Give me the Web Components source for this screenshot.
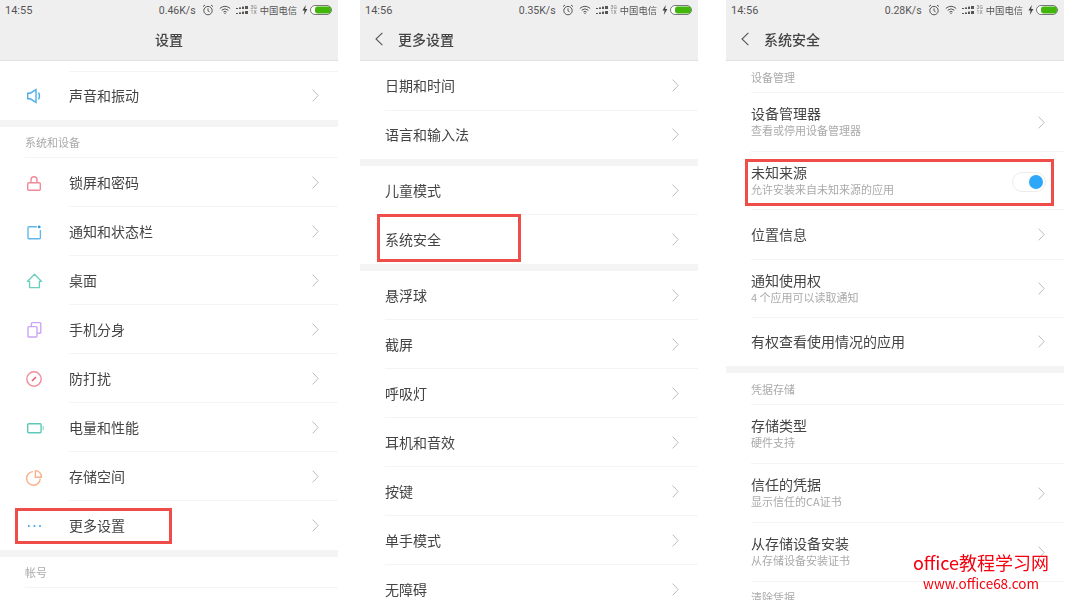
<!DOCTYPE html>
<html lang="zh">
<head>
<meta charset="utf-8">
<title>设置</title>
<style>
    html, body { margin: 0; background: #fff; }
    body { width: 1068px; height: 600px; overflow: hidden; font-family: "Noto Sans CJK SC", "Noto Sans", sans-serif; color: #444; }
    .page { display: flex; position: relative; height: 600px; filter: blur(0.3px); }
    .page phone-screen:nth-child(2) { margin-left: 22px; }
    .page phone-screen:nth-child(3) { margin-left: 28px; }
</style>
</head>
<body>
<div class="page">
    <phone-screen time="14:55" speed="0.46K/s" title="设置" center>
        <set-gap height="11"></set-gap>
        <set-row icon="sound" height="48" last>声音和振动</set-row>
        <set-band></set-band>
        <set-label height="31">系统和设备</set-label>
        <set-row icon="lock">锁屏和密码</set-row>
        <set-row icon="notify">通知和状态栏</set-row>
        <set-row icon="home">桌面</set-row>
        <set-row icon="clone">手机分身</set-row>
        <set-row icon="dnd">防打扰</set-row>
        <set-row icon="battery">电量和性能</set-row>
        <set-row icon="pie">存储空间</set-row>
        <set-row icon="more" last>更多设置</set-row>
        <set-band></set-band>
        <set-label height="31">帐号</set-label>
        <red-box style="left:15px;top:508px;width:157px;height:36px"></red-box>
    </phone-screen>

    <phone-screen time="14:56" speed="0.35K/s" title="更多设置" back>
        <set-row height="50">日期和时间</set-row>
        <set-row height="48" last>语言和输入法</set-row>
        <set-band></set-band>
        <set-row>儿童模式</set-row>
        <set-row last>系统安全</set-row>
        <set-band></set-band>
        <set-row>悬浮球</set-row>
        <set-row>截屏</set-row>
        <set-row>呼吸灯</set-row>
        <set-row>耳机和音效</set-row>
        <set-row>按键</set-row>
        <set-row>单手模式</set-row>
        <set-row last>无障碍</set-row>
        <red-box style="left:17px;top:214px;width:144px;height:48px"></red-box>
    </phone-screen>

    <phone-screen time="14:56" speed="0.28K/s" title="系统安全" back>
        <set-label height="32">设备管理</set-label>
        <set-row sub="查看或停用设备管理器" height="59">设备管理器</set-row>
        <set-row sub="允许安装来自未知来源的应用" height="58" toggle>未知来源</set-row>
        <set-row height="50">位置信息</set-row>
        <set-row sub="4 个应用可以读取通知" height="58">通知使用权</set-row>
        <set-row height="48" last>有权查看使用情况的应用</set-row>
        <set-band></set-band>
        <set-label height="32">凭据存储</set-label>
        <set-row sub="硬件支持" height="59" nochevron>存储类型</set-row>
        <set-row sub="显示信任的CA证书" height="59">信任的凭据</set-row>
        <set-row sub="从存储设备安装证书" height="59">从存储设备安装</set-row>
        <set-label height="31">清除凭据</set-label>
        <red-box style="left:19px;top:159px;width:309px;height:47px"></red-box>
    </phone-screen>

    <water-mark></water-mark>
</div>

<script>
const ICONS = {
    sound: `<g fill="none" stroke="#4fb0ea" stroke-width="1.4"><path d="M3.7 7.2h2.6L12 3.6v12.8l-5.7-3.6H3.7z"/><path d="M14.6 6.6q1.8 3.4 0 6.8"/></g>`,
    lock: `<g fill="none" stroke="#f08a9a" stroke-width="1.4"><rect x="3.7" y="9.7" width="12.6" height="7.6" rx="1"/><path d="M7 9.7V6.8a3 3 0 0 1 6 0v2.9"/></g>`,
    notify: `<path d="M13 4.7H5a1 1 0 0 0-1 1v10a1 1 0 0 0 1 1h10.4a1 1 0 0 0 1-1V8" fill="none" stroke="#62b8ec" stroke-width="1.4"/><circle cx="15.2" cy="4.9" r="1.4" fill="#2a9be6"/>`,
    home: `<path d="M3.4 10.4 10.5 3.2l7.1 7.2h-2.2v6.2H5.6v-6.2z" fill="none" stroke="#6fcfbf" stroke-width="1.4" stroke-linejoin="round"/>`,
    clone: `<g fill="none" stroke="#c9a6f5" stroke-width="1.4"><rect x="4" y="6.6" width="9" height="10.4" rx="1"/><path d="M7.4 6.4V3.6a1 1 0 0 1 1-1h7.4a1 1 0 0 1 1 1v8.6a1 1 0 0 1-1 1H13.2"/></g>`,
    dnd: `<circle cx="10" cy="10" r="7.2" fill="none" stroke="#ee8c9a" stroke-width="1.4"/><path d="M8 12 12 8" stroke="#e4566c" stroke-width="1.4"/>`,
    battery: `<rect x="3.7" y="5.7" width="13.4" height="9" rx="1" fill="none" stroke="#5cc8b8" stroke-width="1.4"/><rect x="18.6" y="8" width="1.2" height="4.2" fill="#8adccf"/>`,
    pie: `<g fill="none" stroke="#f8b08a" stroke-width="1.4"><path d="M9 4.6a6.8 6.8 0 1 0 7.2 7.2"/><path d="M11.4 3.6v6.6h6A6.2 6.2 0 0 0 11.4 3.6z"/></g>`,
    more: `<g fill="#3aa0e8"><circle cx="4.8" cy="10" r="1"/><circle cx="10.4" cy="10" r="1"/><circle cx="16" cy="10" r="1"/></g>`,
};

class PhoneScreen extends HTMLElement {
    constructor() {
        super();
        const title = this.getAttribute("title");
        const center = this.hasAttribute("center");
        const back = this.hasAttribute("back");
        this.removeAttribute("title");
        this.attachShadow({ mode: "open" }).innerHTML = `
      <style>
        :host { display: flex; flex-direction: column; position: relative; width: 338px; height: 600px; overflow: hidden; flex: none; }
        header { flex: none; height: 61px; background: #f0eff0; box-shadow: inset 0 -1px 0 #e2e1e2; }
        .bar { display: flex; align-items: center; height: 41px; font-size: 14px; color: #444; font-weight: 500; padding-bottom: 3px; box-sizing: border-box; }
        .bar.center { justify-content: center; }
        .bar svg { margin: 0 15px 0 15px; flex: none; }
        main { flex: 1; min-height: 0; }
      </style>
      <header>
        <status-bar time="${this.getAttribute("time")}" speed="${this.getAttribute("speed")}"></status-bar>
        <div class="bar ${center ? "center" : ""}">
          ${back ? `<svg width="8" height="14" viewBox="0 0 8 14"><path d="M7.4.8 1 7l6.4 6.2" fill="none" stroke="#555" stroke-width="1.1"/></svg>` : ""}
          <span>${title}</span>
        </div>
      </header>
      <main><slot></slot></main>`;
    }
}

class StatusBar extends HTMLElement {
    constructor() {
        super();
        this.attachShadow({ mode: "open" }).innerHTML = `
      <style>
        :host { display: flex; align-items: center; height: 20px; padding: 0 5px; font: 11px Roboto, "Noto Sans CJK SC", sans-serif; color: #555; }
        .right { margin-left: auto; display: flex; align-items: center; }
        .speed { margin-right: 6px; font-size: 10.5px; }
        .net { display: flex; flex-direction: column; font-size: 5px; line-height: 5px; color: #777; margin: 0 3px 0 2px; }
        .carrier { font: 9.3px/20px "Noto Sans CJK SC", sans-serif; margin-right: 5px; }
        svg { display: block; flex: none; }
      </style>
      <span>${this.getAttribute("time")}</span>
      <div class="right">
        <span class="speed">${this.getAttribute("speed")}</span>
        <svg width="12" height="12" viewBox="0 0 12 12" fill="none" stroke="#555" stroke-width="1"><circle cx="6" cy="6.6" r="4.2"/><path d="M6 4.4v2.4l1.6 1M1 2.6 3 1M11 2.6 9 1"/></svg>
        <svg width="12" height="10" viewBox="0 0 12 10" fill="none" stroke="#555" stroke-width="1" style="margin:0 5px 0 5px"><path d="M.8 3.4Q6-.8 11.2 3.4M2.6 5.2q3.4-2.6 6.8 0M4.4 7q1.6-1.2 3.2 0"/><circle cx="6" cy="8.4" r=".7" fill="#555" stroke="none"/></svg>
        <svg width="13" height="10" viewBox="0 0 13 10" fill="#555"><rect x="0" y="3" width="2" height="1"/><rect x="3" y="2.4" width="2" height="1.6"/><rect x="6" y="1.6" width="2" height="2.4"/><rect x="9" y="1" width="3" height="3"/><rect x="0" y="8" width="2" height="1"/><rect x="3" y="7.4" width="2" height="1.6"/><rect x="6" y="6.6" width="2" height="2.4"/><rect x="9" y="6" width="3" height="3"/></svg>
        <span class="net"><span>3G</span><span>1X</span></span>
        <span class="carrier">中国电信</span>
        <svg width="6" height="10" viewBox="0 0 6 10" fill="#444" style="margin-right:2px"><path d="M3.8 0 .4 5.6h2.2L1.8 10l3.6-6H3.2z"/></svg>
        <svg width="23" height="10" viewBox="0 0 23 10"><rect x=".5" y=".5" width="21" height="9" rx="4.5" fill="#fff" stroke="#777"/><rect x="5" y="1.6" width="16" height="6.8" rx="2.4" fill="#43b60c"/></svg>
      </div>`;
    }
}

class SetRow extends HTMLElement {
    constructor() {
        super();
        const icon = this.getAttribute("icon");
        const sub = this.getAttribute("sub");
        const height = this.getAttribute("height") || 49;
        const last = this.hasAttribute("last");
        const toggle = this.hasAttribute("toggle");
        const nochevron = this.hasAttribute("nochevron");
        this.attachShadow({ mode: "open" }).innerHTML = `
      <style>
        :host { display: flex; align-items: center; height: ${height}px; padding-left: ${icon ? 24 : 25}px; font-size: 14px; color: #444; }
        svg.icon { flex: none; margin-right: 25px; }
        .body { flex: 1; min-width: 0; height: 100%; display: flex; align-items: center; box-sizing: border-box; padding-right: 19px; border-bottom: 1px solid ${last ? "transparent" : "#f4f4f4"}; }
        .text { flex: 1; display: flex; flex-direction: column; ${sub ? "padding-bottom: 2px;" : ""} }
        .main { line-height: 17px; }
        .sub { font-size: 11px; line-height: 14px; margin-top: 1px; color: #aaa; }
        .chev { flex: none; }
        .toggle { flex: none; box-sizing: border-box; width: 34px; height: 20px; border: 1px solid #ececec; border-radius: 10px; margin-right: -1px; margin-bottom: -2px; display: flex; align-items: center; justify-content: flex-end; padding-right: 2px; }
        .toggle i { display: block; width: 14px; height: 14px; border-radius: 50%; background: #2ea7fb; }
      </style>
      ${icon ? `<svg class="icon" width="20" height="20" viewBox="0 0 20 20">${ICONS[icon]}</svg>` : ""}
      <div class="body">
        <div class="text">
          <span class="main"><slot></slot></span>
          ${sub ? `<span class="sub">${sub}</span>` : ""}
        </div>
        ${toggle ? `<span class="toggle"><i></i></span>` : nochevron ? "" : `<svg class="chev" width="7" height="13" viewBox="0 0 7 13"><path d="M.6.6 6.2 6.5.6 12.4" fill="none" stroke="#bbb" stroke-width="1"/></svg>`}
      </div>`;
    }
}

class SetLabel extends HTMLElement {
    constructor() {
        super();
        this.attachShadow({ mode: "open" }).innerHTML = `
      <style>
        :host { display: block; height: ${this.getAttribute("height") || 31}px; padding-left: 25px; font-size: 11px; color: #aaa; }
        div { height: 100%; box-sizing: border-box; display: flex; align-items: center; border-bottom: 1px solid #f4f4f4; }
      </style>
      <div><slot></slot></div>`;
    }
}

class SetBand extends HTMLElement {
    constructor() {
        super();
        this.attachShadow({ mode: "open" }).innerHTML = `
      <style>:host { display: block; height: 7px; background: #f5f4f5; }</style>`;
    }
}

class SetGap extends HTMLElement {
    constructor() {
        super();
        this.attachShadow({ mode: "open" }).innerHTML = `
      <style>
        :host { display: block; height: ${this.getAttribute("height")}px; padding-left: 69px; box-sizing: border-box; }
        div { height: 100%; box-sizing: border-box; border-bottom: 1px solid #f4f4f4; }
      </style>
      <div></div>`;
    }
}

// red annotation frame drawn over a row of the screenshot
class RedBox extends HTMLElement {
    constructor() {
        super();
        this.attachShadow({ mode: "open" }).innerHTML = `
      <style>:host { display: block; position: absolute; box-sizing: border-box; border: 3px solid #ee4d4a; }</style>`;
    }
}

class WaterMark extends HTMLElement {
    constructor() {
        super();
        this.attachShadow({ mode: "open" }).innerHTML = `
      <style>
        :host { display: block; position: absolute; left: 912px; top: 550px; width: 138px; text-align: center; color: #f5000e; font-family: "Noto Sans CJK SC", sans-serif; }
        .a { font-size: 18px; line-height: 24px; white-space: nowrap; }
        .b { font-size: 13.5px; line-height: 18px; white-space: nowrap; }
      </style>
      <div class="a">office教程学习网</div>
      <div class="b">www.office68.com</div>`;
    }
}

customElements.define("phone-screen", PhoneScreen);
customElements.define("status-bar", StatusBar);
customElements.define("set-row", SetRow);
customElements.define("set-label", SetLabel);
customElements.define("set-band", SetBand);
customElements.define("set-gap", SetGap);
customElements.define("red-box", RedBox);
customElements.define("water-mark", WaterMark);
</script>
</body>
</html>
